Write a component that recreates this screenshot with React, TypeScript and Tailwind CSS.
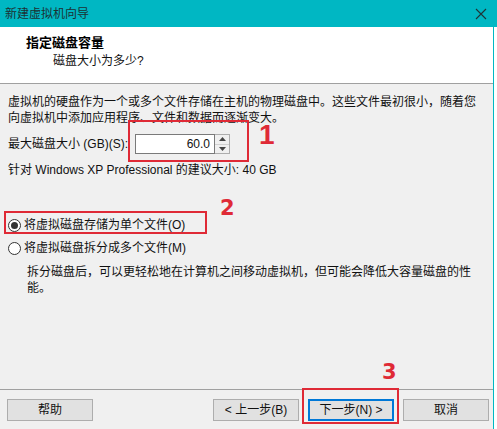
import React from "react";

const font = { fontFamily: '"Liberation Sans", "Noto Sans CJK SC", sans-serif' };
const numFont = { fontFamily: '"DejaVu Sans", sans-serif' };
const oneFont = { fontFamily: '"Liberation Sans", sans-serif' };

function Radio({ checked, label }: { checked: boolean; label: string }) {
  return (
    <div className="flex items-center h-4 pl-2">
      <span className="w-[13px] h-[13px] rounded-full border border-[#333] bg-white flex items-center justify-center">
        {checked && <span className="w-[7px] h-[7px] rounded-full bg-[#333]" />}
      </span>
      <span className="ml-[3px] leading-4">{label}</span>
    </div>
  );
}

function Btn({ label, primary }: { label: string; primary?: boolean }) {
  return (
    <button
      className={
        "h-[22px] w-[86px] bg-[#e1e1e1] text-[12px] text-[#111] flex items-center justify-center " +
        (primary ? "border-2 border-[#0078d7]" : "border border-[#adadad]")
      }
    >
      {label}
    </button>
  );
}

export default function App() {
  return (
    <div className="w-[497px] h-[429px] bg-white text-[12px] text-[#111] flex flex-col overflow-hidden" style={font}>
      {/* title bar */}
      <div className="h-[27px] bg-[#00b7c3] flex items-center justify-between pl-[5px] pr-[10px] shrink-0">
        <span className="text-[#1d3133] text-[12px]">新建虚拟机向导</span>
        <svg width="12" height="12" viewBox="0 0 12 12" className="mt-px">
          <path d="M1 1 L11 11 M11 1 L1 11" stroke="#1f3436" strokeWidth="1.1" />
        </svg>
      </div>

      <div className="flex-1 flex flex-col mr-[3px] border-r border-[#00b7c3]">
        {/* header */}
        <div className="h-[57px] bg-white border-b border-[#a0a0a0] shrink-0 pl-[26px] pt-[7px]">
          <div className="font-bold text-[13px] leading-[18px] text-black">指定磁盘容量</div>
          <div className="pl-[27px] leading-[18px] text-[12px]">磁盘大小为多少?</div>
        </div>

        {/* body */}
        <div className="flex-1 bg-[#f0f0f0] flex flex-col relative">
          <div className="pl-2 pt-[10px] leading-4 whitespace-nowrap">
            <div>虚拟机的硬盘作为一个或多个文件存储在主机的物理磁盘中。这些文件最初很小，随着您</div>
            <div>向虚拟机中添加应用程序、文件和数据而逐渐变大。</div>
          </div>

          <div className="flex items-center pl-2 mt-2 relative">
            <span className="w-[127px] leading-4">最大磁盘大小 (GB)(S):</span>
            <div className="flex h-[20px]">
              <div className="w-[80px] h-[20px] bg-white border border-[#7a7a7a] flex items-center justify-end pr-[4px]">
                60.0
              </div>
              <div className="w-[15px] h-[20px] border border-[#adadad] border-l-0 bg-[#f0f0f0] flex flex-col">
                <div className="flex-1 flex items-center justify-center border-b border-[#d0d0d0]">
                  <svg width="7" height="4" viewBox="0 0 7 4"><path d="M0 4 L3.5 0 L7 4 Z" fill="#444" /></svg>
                </div>
                <div className="flex-1 flex items-center justify-center">
                  <svg width="7" height="4" viewBox="0 0 7 4"><path d="M0 0 L3.5 4 L7 0 Z" fill="#444" /></svg>
                </div>
              </div>
            </div>
            {/* annotation 1 */}
            <div className="absolute left-[128px] top-[-14px] w-[121px] h-[42px] border-2 border-[#df2a36]" />
            <span className="absolute left-[259px] top-[-13px] text-[28px] font-bold text-[#df2a36] leading-none" style={oneFont}>
              1
            </span>
          </div>

          <div className="pl-2 mt-2 leading-4">针对 Windows XP Professional 的建议大小: 40 GB</div>

          <div className="mt-[39px] relative">
            <Radio checked label="将虚拟磁盘存储为单个文件(O)" />
            <div className="absolute left-[4px] top-[-6px] w-[203px] h-[23px] border-2 border-[#df2a36]" />
            <span className="absolute left-[220px] top-[-19px] text-[21px] font-bold text-[#df2a36] leading-none" style={numFont}>
              2
            </span>
          </div>
          <div className="mt-[7px]">
            <Radio checked={false} label="将虚拟磁盘拆分成多个文件(M)" />
          </div>
          <div className="pl-[27px] mt-2 leading-4 whitespace-nowrap">
            <div>拆分磁盘后，可以更轻松地在计算机之间移动虚拟机，但可能会降低大容量磁盘的性</div>
            <div>能。</div>
          </div>
        </div>

        {/* footer */}
        <div className="h-[40px] bg-[#f0f0f0] border-t border-[#a0a0a0] shrink-0 flex items-start pt-[9px] pl-[7px] relative">
          <Btn label="帮助" />
          <div className="ml-auto flex gap-[9px] pr-[4px]">
            <Btn label="< 上一步(B)" />
            <Btn label="下一步(N) >" primary />
            <Btn label="取消" />
          </div>
          {/* annotation 3 */}
          <div className="absolute left-[302px] top-[-2px] w-[97px] h-[36px] border-2 border-[#df2a36]" />
          <span className="absolute left-[382px] top-[-28px] text-[21px] font-bold text-[#df2a36] leading-none" style={numFont}>
            3
          </span>
        </div>
      </div>
    </div>
  );
}
